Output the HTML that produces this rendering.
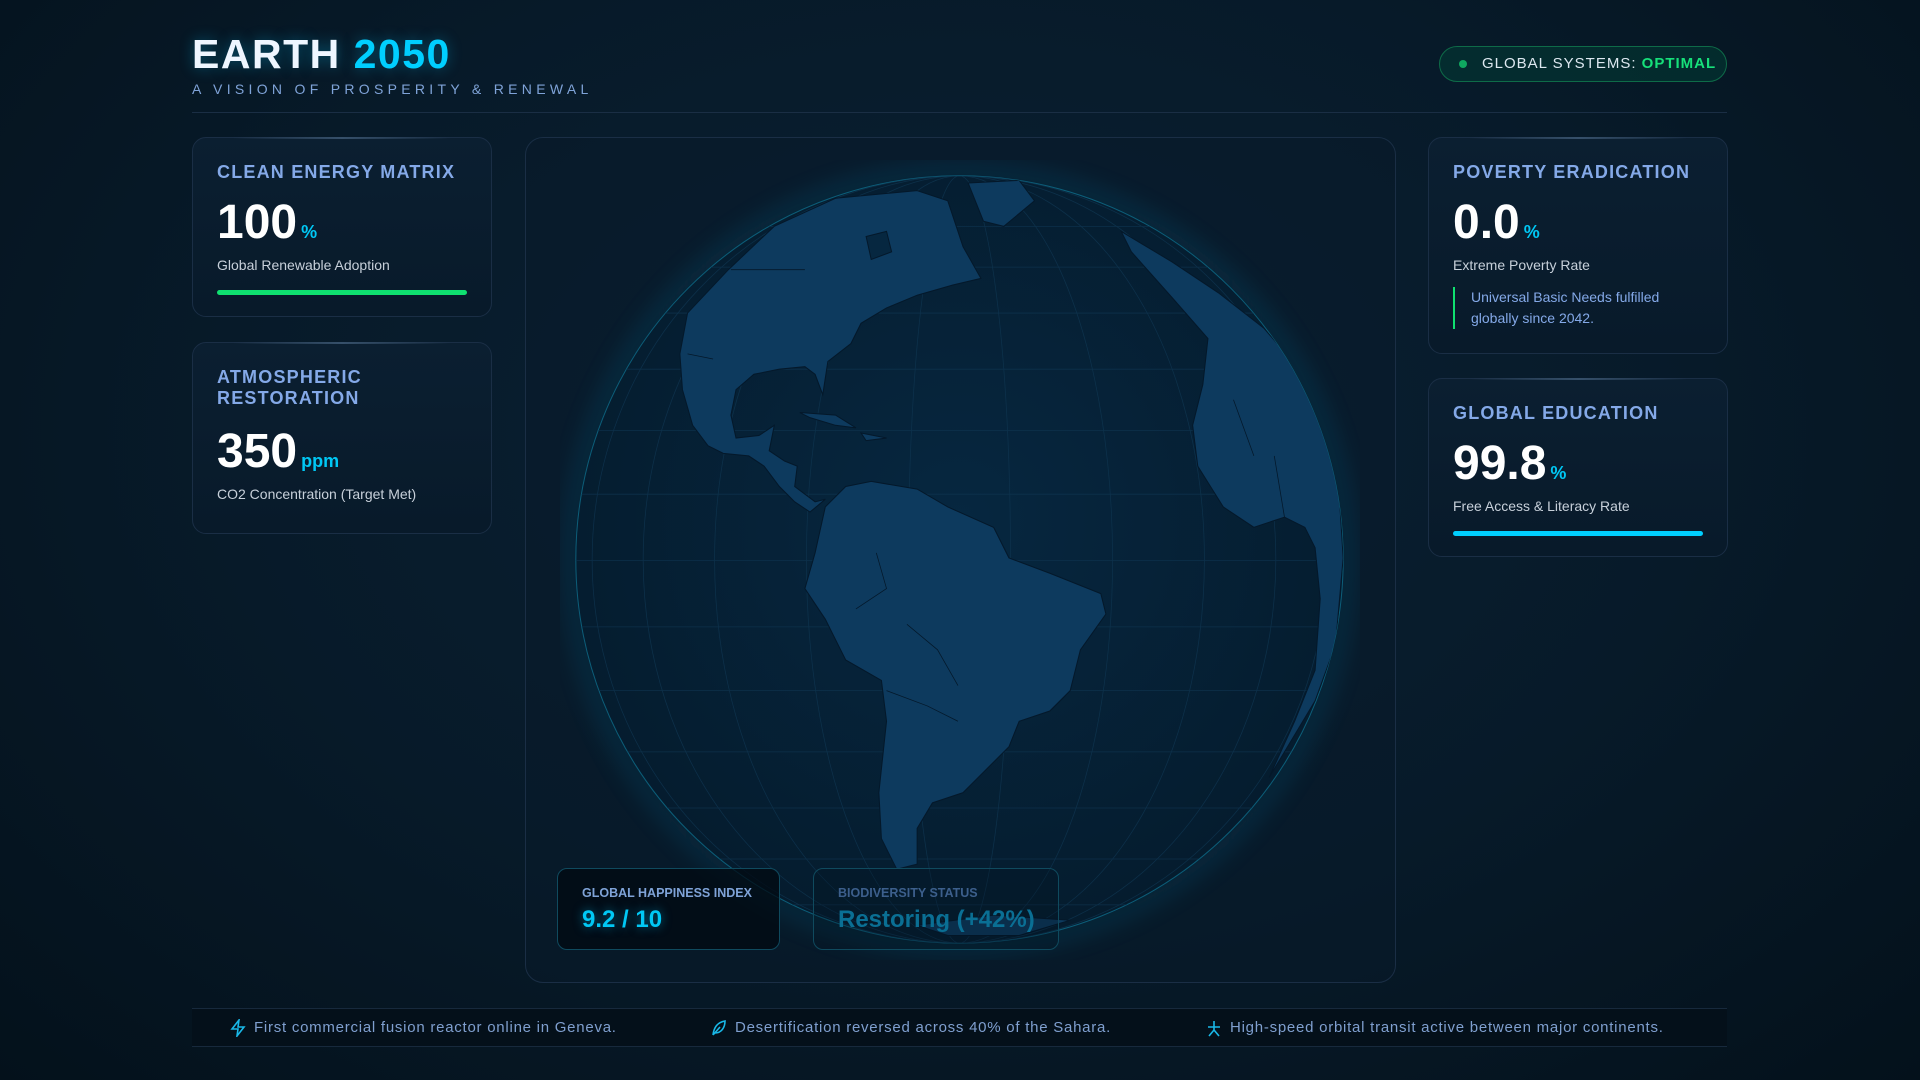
<!DOCTYPE html>
<html><head><meta charset="utf-8"><style>
*{margin:0;padding:0;box-sizing:border-box}
body{width:1920px;height:1080px;overflow:hidden;font-family:"Liberation Sans",sans-serif;background:radial-gradient(ellipse at 50% 40%,#0a2134 0%,#071a29 55%,#04111b 100%);position:relative;color:#fff;white-space:nowrap}
.abs{position:absolute}
h1{position:absolute;left:192px;top:31px;font-size:41px;font-weight:700;letter-spacing:1.5px;color:#eef6ff;text-shadow:0 0 14px rgba(0,200,255,.35)}
h1 span{color:#00cfff}
.sub{left:192px;top:81px;font-size:14px;letter-spacing:4.3px;color:#7fa3d8}
.hline{left:192px;top:112px;width:1535px;height:1px;background:#1a2e44}
.pill{left:1439px;top:46px;width:288px;height:36px;border:1px solid #0e6b48;border-radius:18px;background:rgba(0,80,60,.35);font-size:15px;letter-spacing:1px;color:#dde8f0;line-height:34px;padding-left:42px}
.pill b{color:#16e07a}
.pill i{position:absolute;left:19px;top:13px;width:8px;height:8px;border-radius:50%;background:#0fa860}
.card{position:absolute;width:300px;border:1px solid #1a2e45;border-radius:14px;background:linear-gradient(180deg,#0b1f31,#081a2a);padding:24px 24px 0}
.card:before{content:"";position:absolute;left:40px;right:40px;top:-1px;height:2px;background:linear-gradient(90deg,transparent,#36506a,transparent)}
.ct{font-size:18px;font-weight:700;letter-spacing:1.2px;color:#84a9e8;line-height:21px}
.num{margin-top:15px;font-size:48px;font-weight:700;color:#fff;line-height:50px}
.num small{font-size:18px;color:#00c8f5;margin-left:4px}
.lab{font-size:14px;color:#c7d0da;margin-top:0}
.bar{height:5px;border-radius:3px;margin-top:17px}
.panel{left:525px;top:137px;width:871px;height:846px;border:1px solid #1a2e45;border-radius:18px;background:rgba(8,26,42,.5)}
.mini{position:absolute;top:868px;height:82px;border:1px solid #0f4a5e;border-radius:10px;padding:0 24px}
.mini .t{font-size:12.5px;font-weight:700;color:#7fa3d8;margin-top:17px}
.mini .v{font-size:24px;font-weight:700;color:#00c8f5;margin-top:6px;text-shadow:0 0 10px rgba(0,200,255,.5)}
.ticker{left:192px;top:1008px;width:1535px;height:39px;border-top:1px solid #17293c;border-bottom:1px solid #17293c;background:#04101a}
.tk{position:absolute;top:10px;font-size:15px;letter-spacing:.75px;color:#7f9fcf}
.tk svg{position:absolute;left:-24px;top:0}
</style></head><body>
<h1>EARTH <span>2050</span></h1>
<div class="abs sub">A VISION OF PROSPERITY &amp; RENEWAL</div>
<div class="abs hline"></div>
<div class="abs pill"><i></i>GLOBAL SYSTEMS: <b>OPTIMAL</b></div>

<div class="card" style="left:192px;top:137px;height:180px">
<div class="ct">CLEAN ENERGY MATRIX</div>
<div class="num">100<small>%</small></div>
<div class="lab">Global Renewable Adoption</div>
<div class="bar" style="background:#0fe070;width:250px"></div>
</div>
<div class="card" style="left:192px;top:342px;height:192px">
<div class="ct">ATMOSPHERIC<br>RESTORATION</div>
<div class="num" style="margin-top:18px">350<small>ppm</small></div>
<div class="lab">CO2 Concentration (Target Met)</div>
</div>

<div class="card" style="left:1428px;top:137px;height:217px">
<div class="ct">POVERTY ERADICATION</div>
<div class="num">0.0<small>%</small></div>
<div class="lab">Extreme Poverty Rate</div>
<div style="margin-top:14px;border-left:2px solid #0fe070;padding-left:16px;font-size:14px;line-height:21px;color:#84a9e8">Universal Basic Needs fulfilled<br>globally since 2042.</div>
</div>
<div class="card" style="left:1428px;top:378px;height:179px">
<div class="ct">GLOBAL EDUCATION</div>
<div class="num">99.8<small>%</small></div>
<div class="lab">Free Access &amp; Literacy Rate</div>
<div class="bar" style="background:#00cfff;width:250px"></div>
</div>

<div class="abs panel"></div>
<svg class="abs" style="left:560px;top:160px" width="800" height="800" viewBox="0 0 1568 1568">
<defs>
<radialGradient id="oc" cx="50%" cy="45%" r="55%"><stop offset="0" stop-color="#062740"/><stop offset="1" stop-color="#051c2e"/></radialGradient>
<clipPath id="cp"><circle cx="783" cy="783" r="752"/></clipPath>
<filter id="gl" x="-20%" y="-20%" width="140%" height="140%"><feGaussianBlur stdDeviation="22"/></filter>
</defs>
<circle cx="783" cy="783" r="760" fill="none" stroke="#0a5a80" stroke-width="26" opacity=".35" filter="url(#gl)"/>
<circle cx="783" cy="783" r="752" fill="url(#oc)" stroke="#0c5d78" stroke-width="2"/>
<g clip-path="url(#cp)" fill="none" stroke="#0f3550" stroke-width="1.5" opacity=".8">
<ellipse cx="783" cy="783" rx="100" ry="752"/><ellipse cx="783" cy="783" rx="300" ry="752"/><ellipse cx="783" cy="783" rx="480" ry="752"/><ellipse cx="783" cy="783" rx="620" ry="752"/><ellipse cx="783" cy="783" rx="720" ry="752"/>
<path d="M0 130H1568M0 210H1568M0 300H1568M0 410H1568M0 530H1568M0 655H1568M0 785H1568M0 915H1568M0 1040H1568M0 1160H1568M0 1270H1568M0 1370H1568M0 1460H1568"/>
</g>
<g clip-path="url(#cp)" fill="#0d3a5e" stroke="#04182a" stroke-width="2">
<path d="M330 215L420 130L540 75L700 60L760 80L790 170L825 232L770 245L700 265L640 290L590 320L570 360L525 395L515 460L500 420L480 405L430 410L380 420L345 450L335 500L345 545L390 540L420 520L410 570L440 590L465 600L460 640L500 670L520 665L490 690L460 670L430 640L400 600L370 580L320 575L290 560L260 520L240 450L235 380L250 300Z"/>
<path d="M600 150L640 140L650 180L610 195Z" fill="#062740"/>
<path d="M800 45L900 40L930 80L870 130L830 120Z"/>
<path d="M470 495L540 500L580 525L540 520L490 505Z"/>
<path d="M590 535L640 545L600 550Z"/>
<path d="M520 680L560 640L610 630L700 645L760 680L850 720L880 780L960 810L1060 850L1070 890L1020 960L1000 1040L960 1080L900 1100L880 1150L830 1200L790 1240L730 1260L700 1310L700 1380L660 1390L630 1330L625 1240L640 1100L630 1020L560 980L520 900L480 840L500 770Z"/>
<path d="M1100 140L1200 200L1290 260L1380 330L1440 400L1500 480L1525 620L1535 780L1520 950L1480 1060L1420 1160L1390 1210L1440 1100L1480 1000L1490 860L1480 760L1460 720L1420 700L1360 720L1300 680L1250 600L1240 520L1260 440L1270 350L1200 270L1120 180Z"/>
<path d="M700 1500L850 1480L1000 1490L900 1520L760 1520Z"/>
</g>
<g fill="none" stroke="#04182a" stroke-width="1.5">
<path d="M335 215H480M250 380L300 390M620 770L640 840L580 880M680 910L740 960L780 1030M640 1040L720 1070L780 1100M1320 470L1360 580M1400 580L1420 700"/>
</g>
</svg>

<div class="mini" style="left:557px;width:223px;background:rgba(2,10,18,.75)"><div class="t">GLOBAL HAPPINESS INDEX</div><div class="v">9.2 / 10</div></div>
<div class="mini" style="left:813px;width:246px;background:rgba(4,20,32,.3)"><div class="t" style="color:#3c5f8c">BIODIVERSITY STATUS</div><div class="v" style="color:#0a6f94;text-shadow:none">Restoring (+42%)</div></div>

<div class="abs ticker">
<div class="tk" style="left:62px"><svg width="16" height="18" viewBox="0 0 16 18" fill="none" stroke="#19b8e8" stroke-width="1.6"><path d="M9 1L2 10h6l-1 7 7-9H8z"/></svg>First commercial fusion reactor online in Geneva.</div>
<div class="tk" style="left:543px"><svg width="16" height="18" viewBox="0 0 16 18" fill="none" stroke="#19b8e8" stroke-width="1.6"><path d="M2 16C3 7 8 3 14 2c0 7-4 12-10 12M2 16l7-8"/></svg>Desertification reversed across 40% of the Sahara.</div>
<div class="tk" style="left:1038px"><svg width="16" height="18" viewBox="0 0 16 18" fill="none" stroke="#19b8e8" stroke-width="1.6"><path d="M8 2v9M2 8h12M8 11l-5 6M8 11l5 6"/></svg>High-speed orbital transit active between major continents.</div>
</div>
</body></html>
